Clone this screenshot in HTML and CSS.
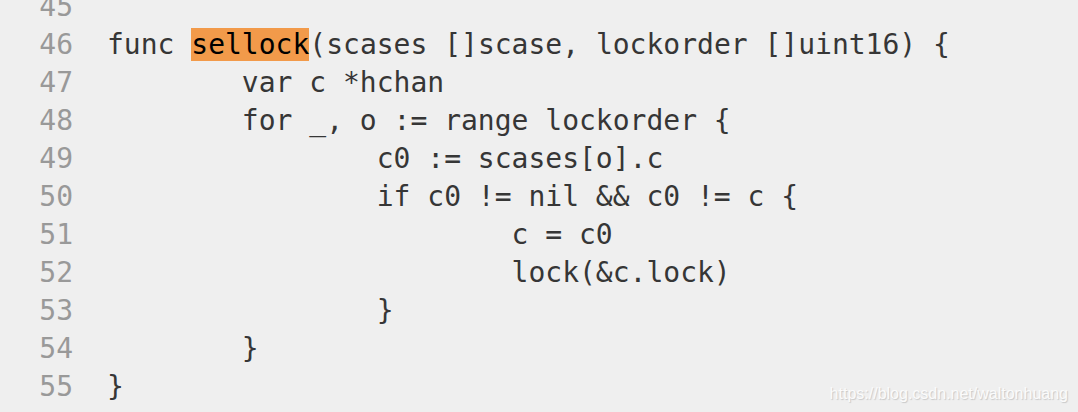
FILE: index.html
```html
<!DOCTYPE html>
<html lang="en">
<head>
<meta charset="utf-8">
<title>sellock</title>
<link rel="stylesheet" href="styles.css">
</head>
<body>
<div class="code">
<div class="line"><span class="num">45</span><span class="src"></span></div>
<div class="line"><span class="num">46</span><span class="src">func <mark class="hl">sellock</mark>(scases []scase, lockorder []uint16) {</span></div>
<div class="line"><span class="num">47</span><span class="src">	var c *hchan</span></div>
<div class="line"><span class="num">48</span><span class="src">	for _, o := range lockorder {</span></div>
<div class="line"><span class="num">49</span><span class="src">		c0 := scases[o].c</span></div>
<div class="line"><span class="num">50</span><span class="src">		if c0 != nil &amp;&amp; c0 != c {</span></div>
<div class="line"><span class="num">51</span><span class="src">			c = c0</span></div>
<div class="line"><span class="num">52</span><span class="src">			lock(&amp;c.lock)</span></div>
<div class="line"><span class="num">53</span><span class="src">		}</span></div>
<div class="line"><span class="num">54</span><span class="src">	}</span></div>
<div class="line"><span class="num">55</span><span class="src">}</span></div>
</div>
<div class="watermark">https://blog.csdn.net/waltonhuang</div>
</body>
</html>
```

FILE: styles.css
```css
html, body {
  margin: 0;
  padding: 0;
  background: #efefef;
  height: 100%;
  overflow: hidden;
}
body {
  position: relative;
}
.code {
  margin-top: -12px;
  display: flex;
  flex-direction: column;
  font-family: "DejaVu Sans Mono", "Liberation Mono", monospace;
  font-size: 28px;
  line-height: 38px;
}
.line {
  display: grid;
  grid-template-columns: 73px 1fr;
  column-gap: 34px;
  height: 38px;
}
.num {
  text-align: right;
  color: #999999;
}
.src {
  white-space: pre;
  tab-size: 8;
  -moz-tab-size: 8;
  color: #363636;
}
.hl {
  background: #f29a4a;
  color: #000;
}
.watermark {
  position: absolute;
  right: 10px;
  bottom: 10px;
  font-family: "Liberation Sans", Arial, sans-serif;
  font-size: 16px;
  line-height: 1;
  color: #fbfbfb;
  text-shadow: 1px 1px 1px #c8c8c8;
}
```
